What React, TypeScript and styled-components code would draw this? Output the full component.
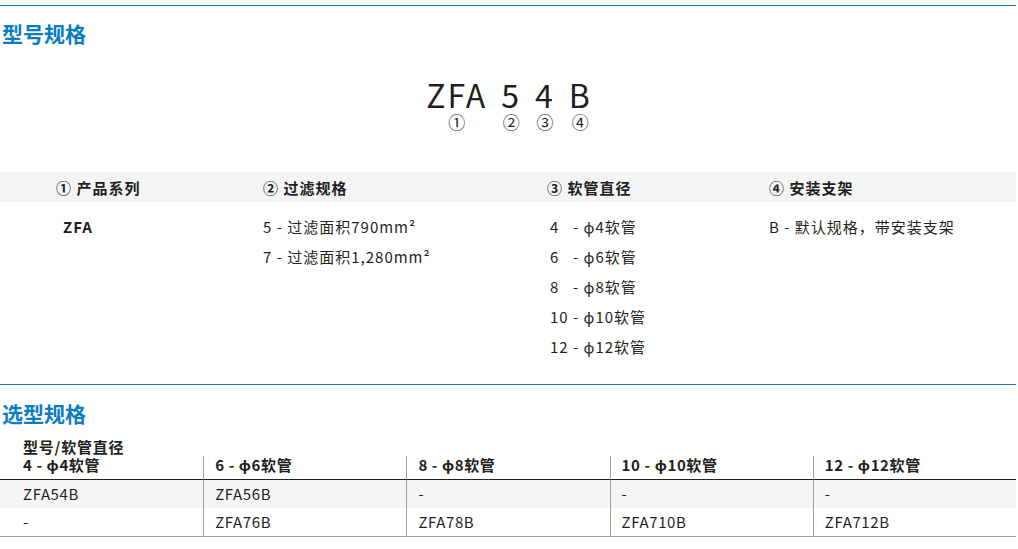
import React from "react";
import styled, { createGlobalStyle } from "styled-components";

const GlobalStyle = createGlobalStyle`
  html, body { margin: 0; padding: 0; background: #fff; }
  body {
    font-family: "Noto Sans CJK SC", "Noto Sans", sans-serif;
    color: #231f20;
    -webkit-font-smoothing: antialiased;
  }
`;

const Page = styled.div`
  width: 1016px;
  padding-top: 5px;
`;

const Section = styled.section`
  border-top: 1px solid #1b78b8;
`;

const Title = styled.h2<{ $top: number }>`
  margin: 0;
  padding: ${(p) => p.$top}px 0 0 2px;
  font-size: 21px;
  line-height: 30px;
  font-weight: 700;
  color: #0a7cc4;
`;

const Model = styled.div`
  display: flex;
  justify-content: center;
  gap: 14px;
  padding-top: 27px;
  margin-left: 2px;
`;

const ModelPart = styled.div`
  display: flex;
  flex-direction: column;
  align-items: center;
`;

const ModelCode = styled.div`
  font-size: 32px;
  line-height: 38px;
  letter-spacing: 2px;
  font-weight: 400;
`;

const ModelMark = styled.div`
  font-size: 17px;
  line-height: 18px;
`;

const specColumns = "207px 284px 222px 1fr";

const SpecHead = styled.div`
  margin-top: 41px;
  display: grid;
  grid-template-columns: ${specColumns};
  padding-left: 56px;
  height: 30px;
  align-items: center;
  background: #f3f4f4;
`;

const HeadCell = styled.div`
  font-size: 15px;
  font-weight: 700;
  letter-spacing: 1px;
`;

const SpecBody = styled.div`
  display: grid;
  grid-template-columns: ${specColumns};
  padding: 10px 0 22px 56px;
`;

const BodyCol = styled.div<{ $indent?: number }>`
  display: flex;
  flex-direction: column;
  padding-left: ${(p) => p.$indent ?? 0}px;
`;

const Line = styled.div<{ $bold?: boolean }>`
  font-size: 15px;
  line-height: 30px;
  font-weight: ${(p) => (p.$bold ? 700 : 400)};
  letter-spacing: 1px;
  white-space: nowrap;
`;

const Num = styled.span`
  display: inline-block;
  width: 23px;
`;

const Caption = styled.div`
  padding: 10px 0 0 23px;
  font-size: 15px;
  font-weight: 700;
  line-height: 18px;
  letter-spacing: 0.8px;
`;

const Table = styled.div`
  display: grid;
  grid-template-columns: repeat(5, 1fr);
  width: 1016px;
`;

const Cell = styled.div<{ $head?: boolean; $shade?: boolean; $first?: boolean; $last?: boolean }>`
  font-size: 15px;
  font-weight: ${(p) => (p.$head ? 700 : 400)};
  letter-spacing: 0.6px;
  height: ${(p) => (p.$head ? 23 : 28)}px;
  line-height: ${(p) => (p.$head ? 17 : 28)}px;
  padding-left: ${(p) => (p.$first ? 23 : 11)}px;
  border-left: ${(p) => (p.$first ? "none" : "1px solid #a0a0a0")};
  background: ${(p) => (p.$shade ? "#f4f5f5" : "transparent")};
  border-bottom: ${(p) =>
    p.$head ? "1px solid #231f20" : p.$last ? "1px solid #a0a0a0" : "none"};
  white-space: nowrap;
`;

const heads = ["4 - ϕ4软管", "6 - ϕ6软管", "8 - ϕ8软管", "10 - ϕ10软管", "12 - ϕ12软管"];
const rows = [
  ["ZFA54B", "ZFA56B", "-", "-", "-"],
  ["-", "ZFA76B", "ZFA78B", "ZFA710B", "ZFA712B"],
];

const hoses = ["4", "6", "8", "10", "12"];
const parts = [
  ["ZFA", "①"],
  ["5", "②"],
  ["4", "③"],
  ["B", "④"],
];

export default function App() {
  return (
    <Page>
      <GlobalStyle />
      <Section>
        <Title $top={12}>型号规格</Title>
        <Model>
          {parts.map(([code, mark]) => (
            <ModelPart key={mark}>
              <ModelCode>{code}</ModelCode>
              <ModelMark>{mark}</ModelMark>
            </ModelPart>
          ))}
        </Model>
        <SpecHead>
          <HeadCell>① 产品系列</HeadCell>
          <HeadCell>② 过滤规格</HeadCell>
          <HeadCell>③ 软管直径</HeadCell>
          <HeadCell>④ 安装支架</HeadCell>
        </SpecHead>
        <SpecBody>
          <BodyCol $indent={7}>
            <Line $bold>ZFA</Line>
          </BodyCol>
          <BodyCol>
            <Line>5 - 过滤面积790mm²</Line>
            <Line>7 - 过滤面积1,280mm²</Line>
          </BodyCol>
          <BodyCol $indent={3}>
            {hoses.map((h) => (
              <Line key={h}>
                <Num>{h}</Num>- ϕ{h}软管
              </Line>
            ))}
          </BodyCol>
          <BodyCol>
            <Line>B - 默认规格，带安装支架</Line>
          </BodyCol>
        </SpecBody>
      </Section>
      <Section>
        <Title $top={13}>选型规格</Title>
        <Caption>型号/软管直径</Caption>
        <Table>
          {heads.map((h, i) => (
            <Cell key={h} $head $first={i === 0}>
              {h}
            </Cell>
          ))}
          {rows.map((r, ri) =>
            r.map((c, ci) => (
              <Cell key={`${ri}-${ci}`} $first={ci === 0} $shade={ri === 0} $last={ri === rows.length - 1}>
                {c}
              </Cell>
            ))
          )}
        </Table>
      </Section>
    </Page>
  );
}
